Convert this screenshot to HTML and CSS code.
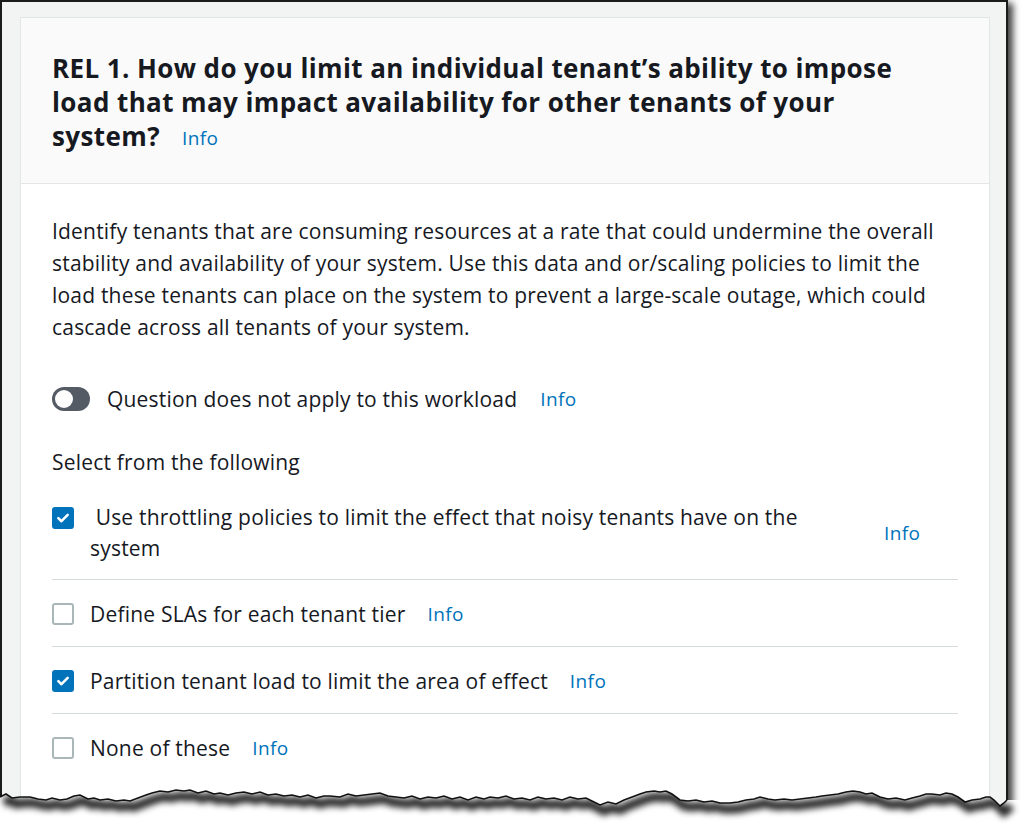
FILE: index.html
```html
<!DOCTYPE html>
<html>
<head>
<meta charset="utf-8">
<link rel="stylesheet" href="styles.css">
</head>
<body>
<div class="frame">
  <div class="card">
    <div class="card-header">
      <h2 class="title"><span class="title-text">REL 1. How do you limit an individual tenant’s ability to impose load that may impact availability for other tenants of your system?</span><a class="info title-info">Info</a></h2>
    </div>
    <div class="card-body">
      <p class="desc">Identify tenants that are consuming resources at a rate that could undermine the overall stability and availability of your system. Use this data and or/scaling policies to limit the load these tenants can place on the system to prevent a large-scale outage, which could cascade across all tenants of your system.</p>
      <div class="toggle-row">
        <span class="toggle"><span class="knob"></span></span>
        <span class="toggle-label">Question does not apply to this workload</span>
        <a class="info">Info</a>
      </div>
      <div class="select-label">Select from the following</div>
      <ul class="choices">
        <li class="choice choice-wide">
          <span class="cb checked"><svg viewBox="0 0 20 20" width="20" height="20"><path d="M4.8 10.2l3.5 3.4L15.2 6.5" fill="none" stroke="#fff" stroke-width="2.8" stroke-linecap="round" stroke-linejoin="round"/></svg></span>
          <span class="choice-label">&nbsp;Use throttling policies to limit the effect that noisy tenants have on the system</span>
          <a class="info info-right">Info</a>
        </li>
        <li class="choice">
          <span class="cb"></span>
          <span class="choice-label">Define SLAs for each tenant tier</span>
          <a class="info">Info</a>
        </li>
        <li class="choice">
          <span class="cb checked"><svg viewBox="0 0 20 20" width="20" height="20"><path d="M4.8 10.2l3.5 3.4L15.2 6.5" fill="none" stroke="#fff" stroke-width="2.8" stroke-linecap="round" stroke-linejoin="round"/></svg></span>
          <span class="choice-label">Partition tenant load to limit the area of effect</span>
          <a class="info">Info</a>
        </li>
        <li class="choice">
          <span class="cb"></span>
          <span class="choice-label">None of these</span>
          <a class="info">Info</a>
        </li>
      </ul>
    </div>
  </div>
  <svg class="tear" viewBox="0 770 1024 56" width="1024" height="56" aria-hidden="true">
    <defs>
      <filter id="blur" x="-5%" y="-100%" width="110%" height="300%"><feGaussianBlur stdDeviation="3.2"/></filter>
      <clipPath id="below"><polygon points="0,797 6,794 12,798 20,797 30,797 38,799 46,800 52,798 60,800 67,799 74,796 80,795 88,799 94,798 100,800 108,799 116,801 124,800 130,801 138,798 146,795 152,793 160,791 168,792 176,790 184,791 190,790 198,793 206,791 214,794 220,793 228,795 236,793 244,792 252,794 260,792 268,795 276,794 284,796 292,795 300,797 308,795 316,798 324,796 330,796 340,797 348,794 356,796 364,795 372,794 380,793 388,796 396,797 404,798 412,796 420,799 428,797 436,798 444,796 452,799 460,797 468,800 476,797 484,799 490,797 498,798 506,796 514,799 522,798 530,800 538,797 546,799 554,798 562,800 570,797 578,799 586,798 594,802 600,805 608,802 616,804 624,800 632,797 640,794 646,792 654,791 660,792 666,791 672,794 680,800 688,801 696,800 704,802 712,801 720,803 730,803 738,802 746,800 754,799 760,797 768,799 775,800 784,799 792,800 800,799 808,798 816,797 822,796 830,795 838,794 846,792 853,791 860,792 866,794 872,793 880,797 888,799 896,798 905,800 912,798 920,796 926,794 932,794 940,795 946,793 952,794 958,797 965,802 972,800 980,799 986,797 990,797 994,800 1000,806 1004,803 1007,800 1024,800 1024,826 0,826"/></clipPath>
    </defs>
    <polygon class="tear-fill" points="0,797 6,794 12,798 20,797 30,797 38,799 46,800 52,798 60,800 67,799 74,796 80,795 88,799 94,798 100,800 108,799 116,801 124,800 130,801 138,798 146,795 152,793 160,791 168,792 176,790 184,791 190,790 198,793 206,791 214,794 220,793 228,795 236,793 244,792 252,794 260,792 268,795 276,794 284,796 292,795 300,797 308,795 316,798 324,796 330,796 340,797 348,794 356,796 364,795 372,794 380,793 388,796 396,797 404,798 412,796 420,799 428,797 436,798 444,796 452,799 460,797 468,800 476,797 484,799 490,797 498,798 506,796 514,799 522,798 530,800 538,797 546,799 554,798 562,800 570,797 578,799 586,798 594,802 600,805 608,802 616,804 624,800 632,797 640,794 646,792 654,791 660,792 666,791 672,794 680,800 688,801 696,800 704,802 712,801 720,803 730,803 738,802 746,800 754,799 760,797 768,799 775,800 784,799 792,800 800,799 808,798 816,797 822,796 830,795 838,794 846,792 853,791 860,792 866,794 872,793 880,797 888,799 896,798 905,800 912,798 920,796 926,794 932,794 940,795 946,793 952,794 958,797 965,802 972,800 980,799 986,797 990,797 994,800 1000,806 1004,803 1007,800 1024,800 1024,826 0,826"/>
    <g clip-path="url(#below)">
      <polyline class="tear-shadow" filter="url(#blur)" transform="translate(4,6)" points="0,797 6,794 12,798 20,797 30,797 38,799 46,800 52,798 60,800 67,799 74,796 80,795 88,799 94,798 100,800 108,799 116,801 124,800 130,801 138,798 146,795 152,793 160,791 168,792 176,790 184,791 190,790 198,793 206,791 214,794 220,793 228,795 236,793 244,792 252,794 260,792 268,795 276,794 284,796 292,795 300,797 308,795 316,798 324,796 330,796 340,797 348,794 356,796 364,795 372,794 380,793 388,796 396,797 404,798 412,796 420,799 428,797 436,798 444,796 452,799 460,797 468,800 476,797 484,799 490,797 498,798 506,796 514,799 522,798 530,800 538,797 546,799 554,798 562,800 570,797 578,799 586,798 594,802 600,805 608,802 616,804 624,800 632,797 640,794 646,792 654,791 660,792 666,791 672,794 680,800 688,801 696,800 704,802 712,801 720,803 730,803 738,802 746,800 754,799 760,797 768,799 775,800 784,799 792,800 800,799 808,798 816,797 822,796 830,795 838,794 846,792 853,791 860,792 866,794 872,793 880,797 888,799 896,798 905,800 912,798 920,796 926,794 932,794 940,795 946,793 952,794 958,797 965,802 972,800 980,799 986,797 990,797 994,800 1000,806 1004,803 1007,800"/>
    </g>
    <polyline class="tear-line" points="0,797 6,794 12,798 20,797 30,797 38,799 46,800 52,798 60,800 67,799 74,796 80,795 88,799 94,798 100,800 108,799 116,801 124,800 130,801 138,798 146,795 152,793 160,791 168,792 176,790 184,791 190,790 198,793 206,791 214,794 220,793 228,795 236,793 244,792 252,794 260,792 268,795 276,794 284,796 292,795 300,797 308,795 316,798 324,796 330,796 340,797 348,794 356,796 364,795 372,794 380,793 388,796 396,797 404,798 412,796 420,799 428,797 436,798 444,796 452,799 460,797 468,800 476,797 484,799 490,797 498,798 506,796 514,799 522,798 530,800 538,797 546,799 554,798 562,800 570,797 578,799 586,798 594,802 600,805 608,802 616,804 624,800 632,797 640,794 646,792 654,791 660,792 666,791 672,794 680,800 688,801 696,800 704,802 712,801 720,803 730,803 738,802 746,800 754,799 760,797 768,799 775,800 784,799 792,800 800,799 808,798 816,797 822,796 830,795 838,794 846,792 853,791 860,792 866,794 872,793 880,797 888,799 896,798 905,800 912,798 920,796 926,794 932,794 940,795 946,793 952,794 958,797 965,802 972,800 980,799 986,797 990,797 994,800 1000,806 1004,803 1007,800"/>
  </svg>
</div>
</body>
</html>
```

FILE: styles.css
```css
html, body {
  margin: 0;
  padding: 0;
  background: #ffffff;
}

body {
  font-family: "Open Sans", "Noto Sans", "Liberation Sans", sans-serif;
  color: #16191f;
  width: 1024px;
  height: 826px;
  overflow: hidden;
  position: relative;
}

.frame {
  position: relative;
  box-sizing: border-box;
  width: 1008px;
  height: 826px;
  background: #f2f3f3;
  border-top: 2px solid #1b1b1b;
  border-left: 2px solid #1b1b1b;
  border-right: 2px solid #1b1b1b;
  padding: 15px 0 0 18px;
  box-shadow: 5px 3px 7px rgba(0, 0, 0, 0.75);
}

.card {
  width: 970px;
  box-sizing: border-box;
  background: #ffffff;
  border: 1px solid #e3e6e6;
  height: 820px;
}

.card-header {
  background: #fafafa;
  border-bottom: 1px solid #e3e6e6;
  padding: 33px 31px 30px;
}

.title {
  margin: 0;
  width: 870px;
  font-size: 26px;
  line-height: 34px;
  font-weight: 700;
  letter-spacing: 0.4px;
  color: #16191f;
}

.info {
  color: #0073bb;
  font-size: 19px;
  font-weight: 400;
  letter-spacing: 0.4px;
  word-spacing: 0;
  text-decoration: none;
}

.title-info {
  margin-left: 22px;
  line-height: 24px;
  vertical-align: 1px;
}

.card-body {
  padding: 31px 31px 0;
  font-size: 21px;
  letter-spacing: 0.2px;
}

.desc {
  margin: 0;
  line-height: 32px;
  width: 906px;
}

.toggle-row {
  display: flex;
  align-items: center;
  margin-top: 40px;
  height: 32px;
}

.toggle {
  position: relative;
  width: 38px;
  height: 24px;
  border-radius: 12px;
  background: #545b64;
  flex: none;
}

.knob {
  position: absolute;
  left: 3px;
  top: 3px;
  width: 18px;
  height: 18px;
  border-radius: 50%;
  background: #ffffff;
}

.toggle-label {
  margin-left: 17px;
}

.toggle-row .info {
  margin-left: 23px;
}

.select-label {
  margin-top: 31px;
  line-height: 32px;
}

.choices {
  list-style: none;
  margin: 8px 0 0;
  padding: 0;
  width: 906px;
}

.choice {
  display: flex;
  align-items: center;
  padding: 18px 0 16px;
  border-bottom: 1px solid #d5dbdb;
  line-height: 32px;
}

.choice:last-child {
  border-bottom: none;
}

.choice-wide {
  padding-top: 16px;
  padding-bottom: 15px;
  line-height: 31px;
}

.choice-wide .cb {
  align-self: flex-start;
  margin-top: 5px;
}

.cb {
  flex: none;
  box-sizing: border-box;
  width: 22px;
  height: 22px;
  border: 2px solid #aab7b8;
  border-radius: 3px;
  background: #ffffff;
  display: flex;
  align-items: center;
  justify-content: center;
}

.cb.checked {
  border-color: #0073bb;
  background: #0073bb;
}

.cb svg {
  display: block;
}

.choice-label {
  margin-left: 16px;
}

.choice .info {
  margin-left: 22px;
}

.choice-wide .choice-label {
  width: 770px;
}

.choice-wide .info-right {
  margin-left: 24px;
}

.tear {
  position: absolute;
  left: -2px;
  top: 768px;
  width: 1024px;
  height: 56px;
  pointer-events: none;
  overflow: visible;
}

.tear-fill {
  fill: #ffffff;
}

.tear-shadow {
  fill: none;
  stroke: rgba(0, 0, 0, 0.85);
  stroke-width: 9;
}

.tear-line {
  fill: none;
  stroke: #111111;
  stroke-width: 1.6;
  stroke-linejoin: miter;
}
```
